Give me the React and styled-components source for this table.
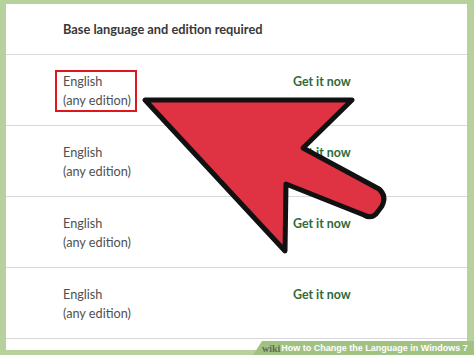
import React from "react";
import styled, { createGlobalStyle } from "styled-components";

const GlobalStyle = createGlobalStyle`
  html, body {
    margin: 0;
    padding: 0;
    background: #b6d19c;
  }
  #root {
    width: 474px;
    height: 355px;
  }
`;

const Frame = styled.div`
  position: relative;
  width: 474px;
  height: 355px;
  box-sizing: border-box;
  padding: 4px 7px 5px 6px;
  background: #b6d19c;
  overflow: hidden;
  font-family: Lato, "Open Sans", sans-serif;
`;

const Panel = styled.div`
  height: 100%;
  background: #ffffff;
  display: flex;
  flex-direction: column;
`;

const HeaderRow = styled.div`
  height: 50px;
  flex-shrink: 0;
  display: flex;
  align-items: center;
  padding-left: 57px;
  border-bottom: 1px solid #d9d9d9;
  font-size: 12.8px;
  font-weight: 700;
  color: #383838;
`;

const Row = styled.div`
  height: 70px;
  flex-shrink: 0;
  display: grid;
  grid-template-columns: 230px 1fr;
  align-items: start;
  padding-left: 57px;
  border-bottom: 1px solid #d9d9d9;
`;

const Edition = styled.div`
  margin-top: 17px;
  font-size: 12.7px;
  line-height: 19px;
  color: #505050;
  ${(p) =>
    p.$marked &&
    `
    justify-self: start;
    margin: 15px 0 0 -8px;
    padding: 0 4px 0 6px;
    border: 2px solid #e0161f;
  `}
`;

const GetLink = styled.a`
  margin-top: 17px;
  font-size: 12.4px;
  line-height: 19px;
  font-weight: 700;
  color: #2f6a3a;
  text-decoration: none;
`;

const Overlay = styled.svg`
  position: absolute;
  left: 0;
  top: 0;
  width: 474px;
  height: 355px;
  pointer-events: none;
`;

const Banner = styled.div`
  position: absolute;
  right: 0;
  bottom: 0;
  width: 221px;
  height: 14px;
  background: #a1c283;
  clip-path: polygon(9px 0, 100% 0, 100% 100%, 0 100%);
  display: flex;
  align-items: center;
  padding-left: 9px;
  box-sizing: border-box;
  font-family: "Liberation Sans", Arial, sans-serif;
  font-size: 9px;
  font-weight: 700;
  color: #ffffff;
  white-space: nowrap;
`;

const Wiki = styled.span`
  font-family: "Liberation Serif", serif;
  font-size: 10px;
  color: #5d6b52;
  margin-right: 1px;
`;

const rows = [true, false, false, false];

export default function App() {
  return (
    <>
      <GlobalStyle />
      <Frame>
        <Panel>
          <HeaderRow>Base language and edition required</HeaderRow>
          {rows.map((marked, i) => (
            <Row key={i}>
              <Edition $marked={marked}>
                English
                <br />
                (any edition)
              </Edition>
              <GetLink href="#">Get it now</GetLink>
            </Row>
          ))}
        </Panel>
        <Overlay viewBox="0 0 474 355">
          <path
            d="M145 100 L352 100 L303 148 L379 189 Q387 196 382 206 L376 214 Q371 219 364 215 L286 184 L285 251 Z"
            fill="#df3242"
            stroke="#111"
            strokeWidth="5"
            strokeLinejoin="round"
          />
        </Overlay>
        <Banner>
          <Wiki>wiki</Wiki>How to Change the Language in Windows 7
        </Banner>
      </Frame>
    </>
  );
}
